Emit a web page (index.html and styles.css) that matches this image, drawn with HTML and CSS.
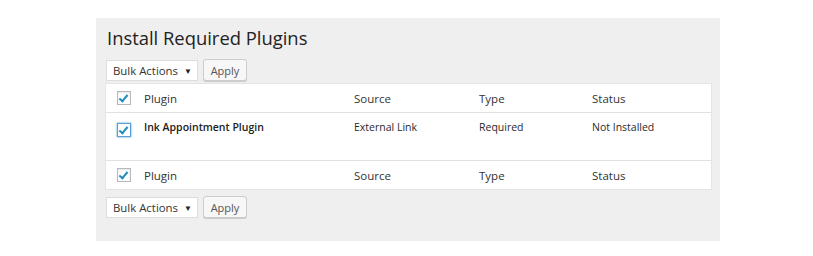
FILE: index.html
```html
<!DOCTYPE html>
<html lang="en">
<head>
    <meta charset="UTF-8">
    <meta name="viewport" content="width=device-width, initial-scale=1.0">
    <title>Install Required Plugins</title>
    <link rel="stylesheet" href="styles.css">
</head>
<body>
    <div class="wrap">
        <h2 class="page-title">Install Required Plugins</h2>

        <div class="tablenav">
            <div class="select">Bulk Actions <span class="caret">&#9660;</span></div>
            <button class="button">Apply</button>
        </div>

        <table class="plugins">
            <thead>
                <tr>
                    <th class="check-column"><span class="checkbox"></span></th>
                    <th class="col-plugin">Plugin</th>
                    <th class="col-source">Source</th>
                    <th class="col-type">Type</th>
                    <th class="col-status">Status</th>
                </tr>
            </thead>
            <tbody>
                <tr class="item">
                    <td class="check-column"><span class="checkbox focus"></span></td>
                    <td><strong>Ink Appointment Plugin</strong></td>
                    <td>External Link</td>
                    <td>Required</td>
                    <td>Not Installed</td>
                </tr>
            </tbody>
            <tfoot>
                <tr>
                    <th class="check-column"><span class="checkbox"></span></th>
                    <th>Plugin</th>
                    <th>Source</th>
                    <th>Type</th>
                    <th>Status</th>
                </tr>
            </tfoot>
        </table>

        <div class="tablenav">
            <div class="select">Bulk Actions <span class="caret">&#9660;</span></div>
            <button class="button">Apply</button>
        </div>
    </div>
</body>
</html>
```

FILE: styles.css
```css
body {
    margin: 0;
    padding: 18px 0 0 96px;
    font-family: "Open Sans", sans-serif;
    font-size: 11px;
    color: #333;
    background: #fff;
}
.wrap {
    width: 604px;
    height: 223px;
    padding: 0 10px;
    background: #efefef;
    box-sizing: content-box;
}
.page-title {
    margin: 0;
    padding: 7px 0 0 1px;
    height: 35px;
    font-size: 18.4px;
    font-weight: 400;
    color: #222;
    line-height: 26px;
}
.tablenav {
    display: flex;
    gap: 5px;
    height: 21px;
    margin-bottom: 3px;
}
.select {
    display: flex;
    align-items: center;
    justify-content: space-between;
    width: 79px;
    padding: 0 5px 0 6px;
    background: #fff;
    border: 1px solid #ddd;
    font-size: 11.4px;
    color: #333;
}
.caret {
    font-size: 8px;
    color: #222;
}
.button {
    height: 22px;
    width: 44px;
    padding: 0;
    margin-top: -1px;
    font-family: "Open Sans", sans-serif;
    font-size: 11px;
    color: #555;
    background: #f7f7f7;
    border: 1px solid #ccc;
    border-radius: 3px;
    box-shadow: 0 1px 0 #ccc;
}
.plugins {
    width: 605px;
    border-collapse: collapse;
    background: #fff;
    box-shadow: 0 1px 1px rgba(0, 0, 0, 0.06);
    outline: 1px solid #e5e5e5;
    margin-bottom: 8px;
    table-layout: fixed;
}
.plugins th,
.plugins td {
    text-align: left;
    padding: 0 10px;
    font-weight: 400;
}
.plugins thead th,
.plugins tfoot th {
    height: 28px;
    font-size: 11.5px;
    color: #333;
}
.plugins thead tr {
    border-bottom: 1px solid #e1e1e1;
}
.plugins tfoot tr {
    border-top: 1px solid #e1e1e1;
}
.plugins .item td {
    height: 40px;
    vertical-align: top;
    padding-top: 7px;
    color: #2a2a2a;
    font-size: 10.5px;
}
.plugins .item strong {
    font-weight: 600;
    color: #222;
}
.plugins .check-column {
    width: 28px;
    padding: 0 0 0 11px;
    box-sizing: border-box;
}
.plugins .item .check-column {
    padding-top: 10px;
}
.col-plugin {
    width: 190px;
}
.col-source {
    width: 105px;
}
.col-type {
    width: 93px;
}
.checkbox {
    display: block;
    position: relative;
    width: 12px;
    height: 12px;
    border: 1px solid #b4b9be;
    background: #fff;
    box-shadow: inset 0 1px 2px rgba(0, 0, 0, 0.1);
}
.checkbox.focus {
    border-color: #5b9dd9;
    box-shadow: 0 0 2px rgba(30, 140, 190, 0.8);
}
.checkbox::after {
    content: "";
    position: absolute;
    left: 3px;
    top: 1px;
    width: 3px;
    height: 7px;
    border: solid #1e8cbe;
    border-width: 0 2px 2px 0;
    transform: rotate(40deg);
}
```
